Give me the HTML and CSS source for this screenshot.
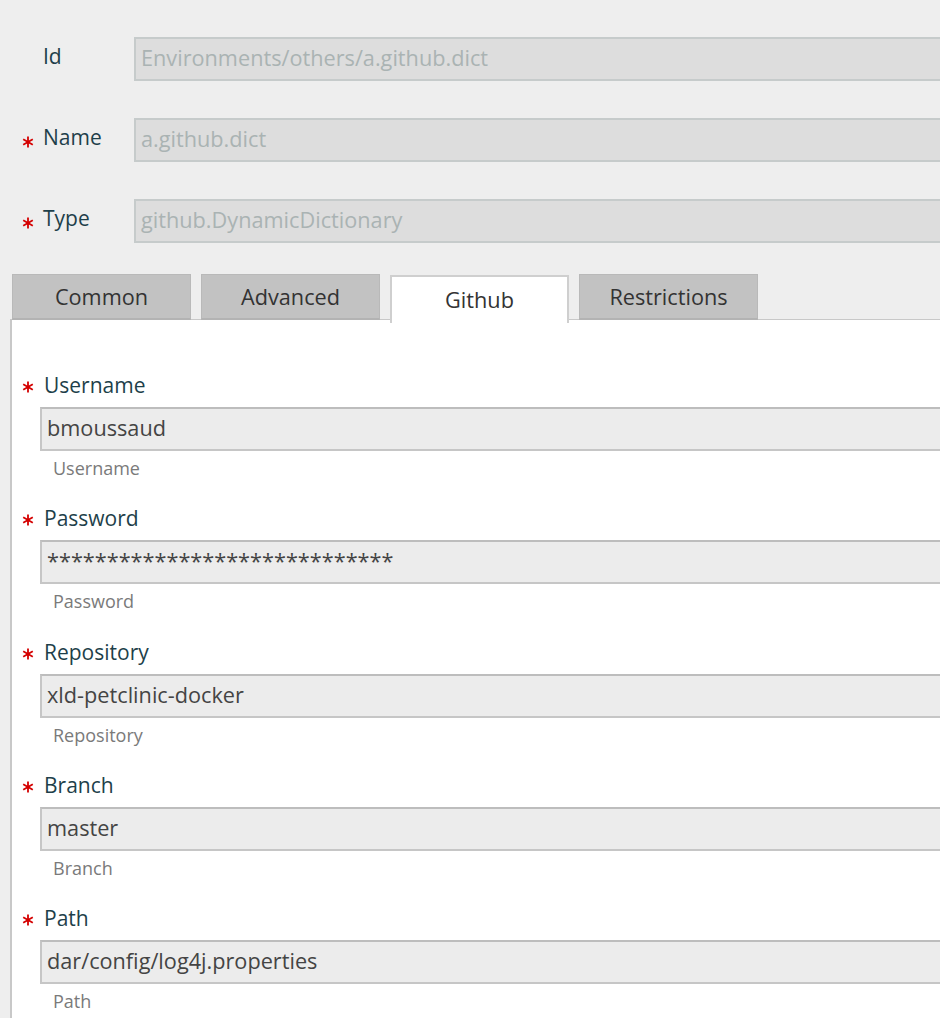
FILE: index.html
```html
<!DOCTYPE html>
<html>
<head>
<meta charset="utf-8">
<link rel="stylesheet" href="styles.css">
</head>
<body>
<div class="page">
  <div class="top-row">
    <span class="req hidden"><svg viewBox="0 0 12 12" width="12" height="12"><path d="M6 0.5V11.5M1.2 3.2L10.8 8.8M1.2 8.8L10.8 3.2" stroke="#d40000" stroke-width="1.8"/></svg></span>
    <span class="top-label">Id</span>
    <div class="top-input">Environments/others/a.github.dict</div>
  </div>
  <div class="top-row">
    <span class="req"><svg viewBox="0 0 12 12" width="12" height="12"><path d="M6 0.5V11.5M1.2 3.2L10.8 8.8M1.2 8.8L10.8 3.2" stroke="#d40000" stroke-width="1.8"/></svg></span>
    <span class="top-label">Name</span>
    <div class="top-input">a.github.dict</div>
  </div>
  <div class="top-row">
    <span class="req"><svg viewBox="0 0 12 12" width="12" height="12"><path d="M6 0.5V11.5M1.2 3.2L10.8 8.8M1.2 8.8L10.8 3.2" stroke="#d40000" stroke-width="1.8"/></svg></span>
    <span class="top-label">Type</span>
    <div class="top-input">github.DynamicDictionary</div>
  </div>

  <div class="tabs">
    <div class="tab">Common</div>
    <div class="tab">Advanced</div>
    <div class="tab active">Github</div>
    <div class="tab">Restrictions</div>
  </div>
  <div class="panel">
    <div class="field">
      <div class="field-label"><span class="req"><svg viewBox="0 0 12 12" width="12" height="12"><path d="M6 0.5V11.5M1.2 3.2L10.8 8.8M1.2 8.8L10.8 3.2" stroke="#d40000" stroke-width="1.8"/></svg></span>Username</div>
      <div class="field-input">bmoussaud</div>
      <div class="help">Username</div>
    </div>
    <div class="field">
      <div class="field-label"><span class="req"><svg viewBox="0 0 12 12" width="12" height="12"><path d="M6 0.5V11.5M1.2 3.2L10.8 8.8M1.2 8.8L10.8 3.2" stroke="#d40000" stroke-width="1.8"/></svg></span>Password</div>
      <div class="field-input">*****************************</div>
      <div class="help">Password</div>
    </div>
    <div class="field">
      <div class="field-label"><span class="req"><svg viewBox="0 0 12 12" width="12" height="12"><path d="M6 0.5V11.5M1.2 3.2L10.8 8.8M1.2 8.8L10.8 3.2" stroke="#d40000" stroke-width="1.8"/></svg></span>Repository</div>
      <div class="field-input">xld-petclinic-docker</div>
      <div class="help">Repository</div>
    </div>
    <div class="field">
      <div class="field-label"><span class="req"><svg viewBox="0 0 12 12" width="12" height="12"><path d="M6 0.5V11.5M1.2 3.2L10.8 8.8M1.2 8.8L10.8 3.2" stroke="#d40000" stroke-width="1.8"/></svg></span>Branch</div>
      <div class="field-input">master</div>
      <div class="help">Branch</div>
    </div>
    <div class="field">
      <div class="field-label"><span class="req"><svg viewBox="0 0 12 12" width="12" height="12"><path d="M6 0.5V11.5M1.2 3.2L10.8 8.8M1.2 8.8L10.8 3.2" stroke="#d40000" stroke-width="1.8"/></svg></span>Path</div>
      <div class="field-input">dar/config/log4j.properties</div>
      <div class="help">Path</div>
    </div>
  </div>
</div>
</body>
</html>
```

FILE: styles.css
```css
html, body {
  margin: 0;
  padding: 0;
  background: #eeeeee;
  overflow: hidden;
}
body {
  font-family: "Open Sans", "Liberation Sans", sans-serif;
  font-size: 21px;
}
.page {
  width: 1000px;
  height: 1018px;
  overflow: hidden;
  padding-top: 37px;
  box-sizing: border-box;
}
.top-row {
  display: flex;
  align-items: center;
  padding-left: 22px;
  height: 44px;
  margin-bottom: 37px;
}
.req {
  width: 12px;
  height: 12px;
  display: inline-flex;
  flex: none;
  margin-top: 3px;
}
.req svg { display: block; }
.hidden { visibility: hidden; }
.top-label {
  width: 91px;
  margin-left: 9px;
  color: #1e3f4a;
  line-height: 28px;
  margin-top: -6px;
}
.top-input {
  flex: 1;
  box-sizing: border-box;
  height: 44px;
  border: 2px solid #c6cbcb;
  background: #dddddd;
  color: #aab3b3;
  padding-left: 5px;
  font-size: 21.7px;
  line-height: 38px;
}
.tabs {
  display: flex;
  gap: 10px;
  padding-left: 12px;
  margin-top: -6px;
  height: 46px;
  position: relative;
  z-index: 1;
}
.tab {
  width: 179px;
  height: 46px;
  box-sizing: border-box;
  background: #c2c2c2;
  border: 1px solid #b9b9b9;
  border-bottom: 2px solid #b3b3b3;
  color: #333333;
  text-align: center;
  font-size: 21.7px;
  line-height: 44px;
}
.tab.active {
  height: 48px;
  margin-top: 1px;
  background: #ffffff;
  border: 2px solid #cfcfcf;
  border-bottom: none;
  line-height: 45px;
}
.panel {
  margin-left: 10px;
  margin-top: -1px;
  background: #ffffff;
  border-left: 2px solid #c8c8c8;
  border-top: 1px solid #c8c8c8;
  padding: 51px 0 0 28px;
  height: 800px;
}
.field {
  margin-bottom: 25.3px;
}
.field-label {
  display: flex;
  align-items: center;
  margin-left: -18px;
  gap: 10px;
  color: #1e3f4a;
  line-height: 28px;
  height: 28px;
}
.field-label .req { margin-top: 4px; }
.field-input {
  margin-top: 8px;
  height: 44px;
  box-sizing: border-box;
  border: 2px solid #c6c6c6;
  border-top-color: #bdbdbd;
  background: #ececec;
  color: #444444;
  padding-left: 5px;
  font-size: 21.7px;
  line-height: 38px;
}
.help {
  margin-top: 6px;
  padding-left: 13px;
  font-size: 18px;
  line-height: 22px;
  color: #7a7a7a;
}
```
